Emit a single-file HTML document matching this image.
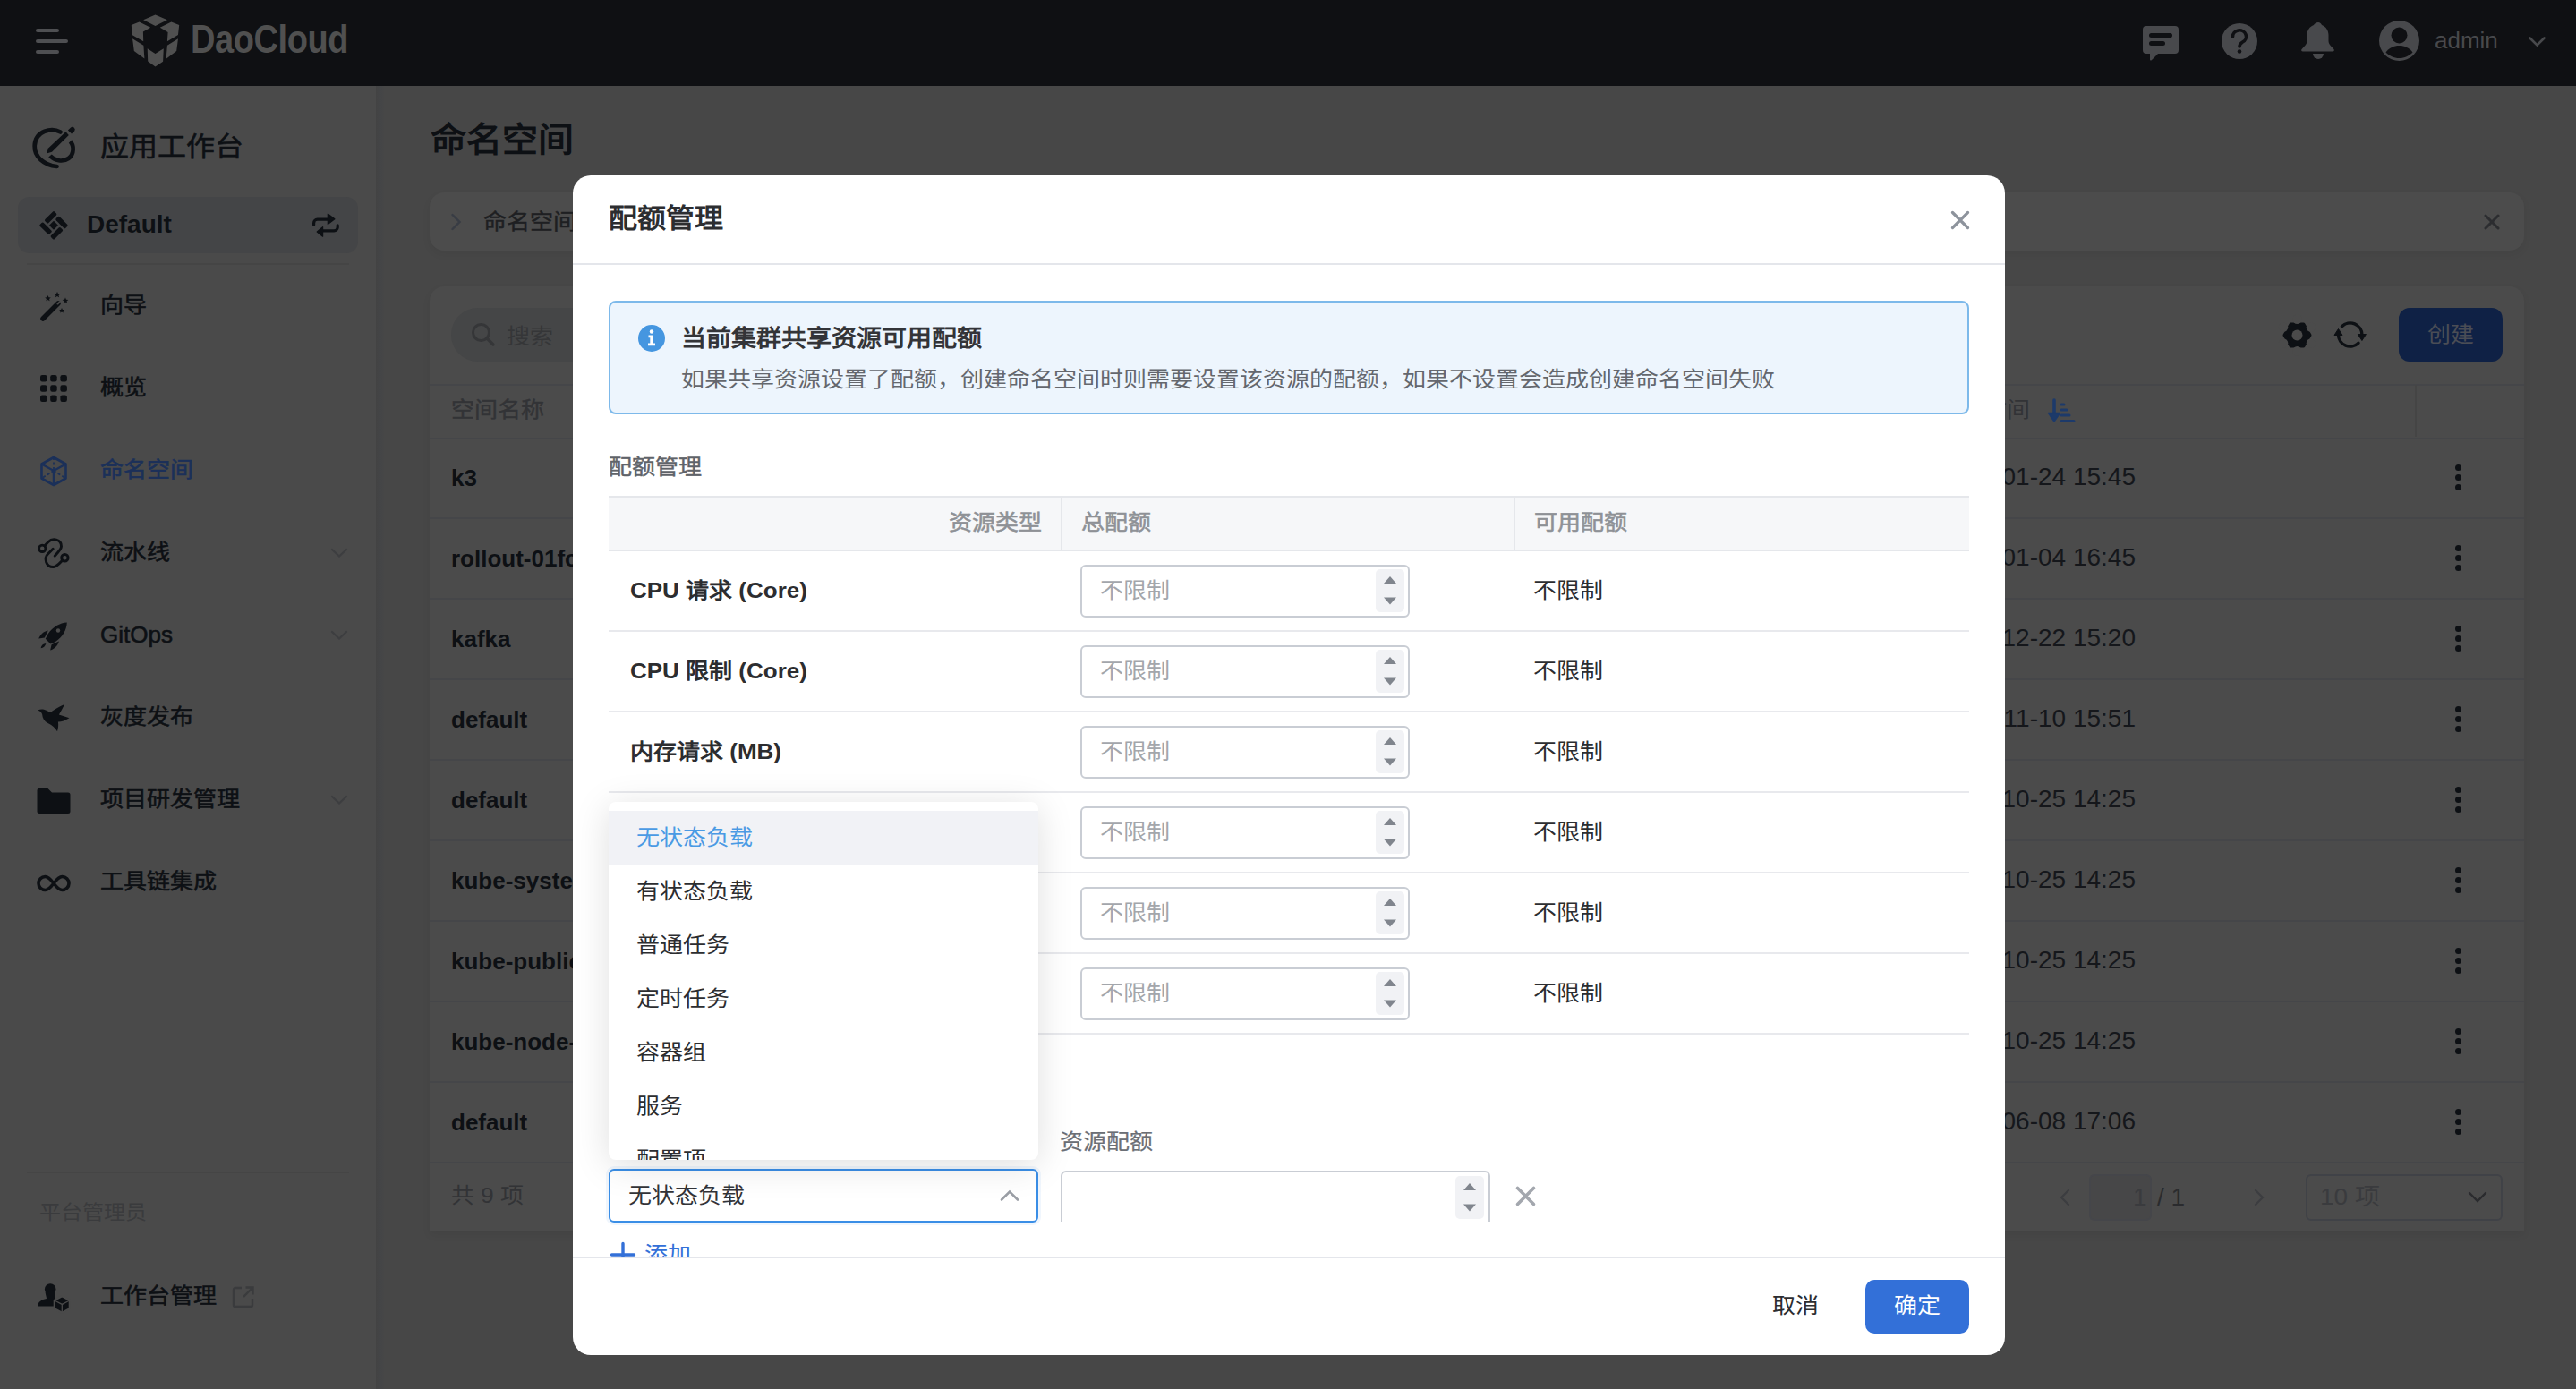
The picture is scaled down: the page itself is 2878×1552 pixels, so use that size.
<!DOCTYPE html>
<html lang="zh-CN"><head><meta charset="utf-8">
<style>
*{margin:0;padding:0;box-sizing:border-box}
html,body{width:2878px;height:1552px;overflow:hidden}
body{position:relative;background:#474747;font-family:"Liberation Sans",sans-serif;color:#0d1014}
.a{position:absolute;white-space:nowrap}
svg{position:absolute;overflow:visible}
/* header */
#hdr{position:absolute;left:0;top:0;width:2878px;height:96px;background:#0f1013}
/* sidebar */
#side{position:absolute;left:0;top:96px;width:420px;height:1456px;background:#4a4a4a}
#sideb{position:absolute;left:420px;top:96px;width:10px;height:1456px;background:linear-gradient(to right,#434343,#444547 50%,#474747)}
.nav{font-size:26px;line-height:40px;color:#0d1014;-webkit-text-stroke:0.6px currentColor}
.med{-webkit-text-stroke:0.6px currentColor}
/* bg table */
.card{position:absolute;background:#4a4a4a;border-radius:16px}
.hl{position:absolute;height:2px;background:#454649}
.tn{font-size:26px;line-height:40px;font-weight:bold;color:#0d1014}
.td{font-size:28px;line-height:40px;color:#15171b}
.keb{position:absolute;width:7px;height:7px;border-radius:50%;background:#0d1014}
/* modal */
#modal{position:absolute;left:640px;top:196px;width:1600px;height:1318px;background:#fff;border-radius:20px;overflow:hidden}
.m{position:absolute;white-space:nowrap}
</style></head><body>

<!-- HEADER -->
<div id="hdr">
  <div class="a" style="left:40px;top:32px;width:26px;height:4px;border-radius:2px;background:#4e4f52"></div>
  <div class="a" style="left:40px;top:44px;width:36px;height:4px;border-radius:2px;background:#4e4f52"></div>
  <div class="a" style="left:40px;top:56px;width:26px;height:4px;border-radius:2px;background:#4e4f52"></div>
  <!-- logo cube -->
  <svg style="left:146px;top:16px" width="56" height="60" viewBox="0 0 56 60">
    <g fill="#505050">
      <polygon points="27.5,0.55 40.9,6.35 27.5,12.9 14.2,6.35"/>
      <polygon points="0.8,12.1 9.6,8.4 22.2,14.7 13.9,19.45 14.2,30.3 1.56,23"/>
      <polygon points="54.2,12.1 45.4,8.4 32.8,14.7 41.6,19.95 40.9,30.3 52.97,23"/>
      <polygon points="2.06,27.3 14.4,34.8 15.4,49.4 3.8,41.1"/>
      <polygon points="52.97,27.3 40.9,34.8 39.6,49.7 51.2,41.1"/>
      <polygon points="18.7,38.35 27.5,43.9 36.8,38.35 36.1,52.7 27.5,58.5 19.2,52.5"/>
    </g>
  </svg>
  <div class="a" style="left:213px;top:16px;font-size:45px;line-height:56px;font-weight:bold;color:#505050;transform:scaleX(0.845);transform-origin:0 0;letter-spacing:-0.5px">DaoCloud</div>
  <!-- chat -->
  <svg style="left:2394px;top:29px" width="40" height="38" viewBox="0 0 40 38">
    <path fill="#48494c" d="M4 0h32a4 4 0 0 1 4 4v23a4 4 0 0 1-4 4H17l-7 7c-1 1-2 0.5-2-0.5V31H4a4 4 0 0 1-4-4V4a4 4 0 0 1 4-4z"/>
    <rect x="7" y="8" width="26" height="5" rx="2.5" fill="#0f1013"/>
    <rect x="7" y="17" width="18" height="5" rx="2.5" fill="#0f1013"/>
  </svg>
  <!-- help -->
  <svg style="left:2482px;top:25.5px" width="40" height="40" viewBox="0 0 40 40">
    <circle cx="20" cy="20" r="20" fill="#48494c"/>
    <path d="M12.5 15a7.5 7 0 1 1 11 6c-2.5 1.5-3.5 2.5-3.5 5" fill="none" stroke="#0f1013" stroke-width="3.6" stroke-linecap="round"/>
    <circle cx="20" cy="31.5" r="2.3" fill="#0f1013"/>
  </svg>
  <!-- bell -->
  <svg style="left:2571px;top:25px" width="38" height="42" viewBox="0 0 38 42">
    <path fill="#48494c" d="M19 0c2 0 3.5 1.5 4 3 4.5 1.5 7.5 6 7.5 11v7c0 3 2 5 5.5 8.5 1.5 1.5 1 3-1 3H2c-2 0-2.5-1.5-1-3C4.5 26 6.5 24 6.5 21v-7c0-5 3-9.5 7.5-11C14.5 1.5 17 0 19 0z"/>
    <path fill="#48494c" d="M13 35h12a6 6 0 0 1-12 0z"/>
  </svg>
  <!-- avatar -->
  <svg style="left:2657.5px;top:23px" width="45" height="45" viewBox="0 0 45 45">
    <circle cx="22.5" cy="22.5" r="22.5" fill="#48494c"/>
    <circle cx="22.5" cy="16.5" r="9" fill="#0f1013"/>
    <path d="M7.5 35.5C11 30.5 16.5 28 22.5 28s11.5 2.5 15 7.5C33.5 39.5 28.5 42 22.5 42s-11-2.5-15-6.5z" fill="#0f1013"/>
  </svg>
  <div class="a" style="left:2720px;top:27px;font-size:26px;line-height:36px;color:#48494c">admin</div>
  <svg style="left:2825px;top:41px" width="19" height="11" viewBox="0 0 19 11"><path d="M1.5 1.5l8 8 8-8" fill="none" stroke="#48494c" stroke-width="2.6" stroke-linecap="round"/></svg>
</div>

<!-- SIDEBAR -->
<div id="side"></div>
<div id="sideb"></div>
<!-- workbench -->
<svg style="left:30px;top:130px" width="60" height="65" viewBox="0 0 60 65">
  <path d="M37.5 17.5C28 12.5 9.5 15.5 8.7 33C8.3 45 19 54.5 33.5 56" fill="none" stroke="#0d1014" stroke-width="4.7" stroke-linecap="round"/>
  <path d="M48.5 28C52.5 32 53.5 42 46.5 47C40 51.5 31 49.5 26 44" fill="none" stroke="#0d1014" stroke-width="4.7"/>
  <path d="M22 41.6l2-6L43.5 17.3l3.3 3.7L28 39.8z" fill="#0d1014"/>
  <path d="M45.9 15.4l3.2-3a3 3 0 0 1 4.1 4.2l-3.2 3z" fill="#0d1014"/>
</svg>
<div class="a nav" style="left:112px;top:144px;font-size:32px;line-height:40px;transform:scaleY(0.92)">应用工作台</div>
<!-- default box -->
<div class="a" style="left:20px;top:220px;width:380px;height:63px;border-radius:13px;background:#444547"></div>
<svg style="left:40px;top:230px" width="40" height="42" viewBox="0 0 40 42">
  <g transform="translate(20 21.8) rotate(-45)" fill="#0d1014">
    <rect x="-3.60" y="-11.5" width="15.10" height="5.6" rx="1.6"/>
    <rect x="5.90" y="-3.60" width="5.6" height="15.10" rx="1.6"/>
    <rect x="-11.5" y="5.90" width="15.10" height="5.6" rx="1.6"/>
    <rect x="-11.5" y="-11.5" width="5.6" height="15.10" rx="1.6"/>
    <rect x="-3.60" y="-3.60" width="7.20" height="7.20" rx="0.8"/>
  </g>
</svg>
<div class="a nav" style="left:97px;top:231px;font-weight:bold;font-size:28px;-webkit-text-stroke:0">Default</div>
<svg style="left:340px;top:230px" width="50" height="42" viewBox="0 0 50 42">
  <path d="M10.6 21.2v-2a4 4 0 0 1 4-4h12" fill="none" stroke="#0d1014" stroke-width="3.2" stroke-linecap="round"/>
  <path d="M26.3 9.1l7.6 5.7-7.6 5.8z" fill="#0d1014" stroke="#0d1014" stroke-width="1.2" stroke-linejoin="round"/>
  <path d="M37.2 21.8v2a4 4 0 0 1-4 4h-12" fill="none" stroke="#0d1014" stroke-width="3.2" stroke-linecap="round"/>
  <path d="M20.6 23.6l-6.4 5.4 6.4 5.2z" fill="#0d1014" stroke="#0d1014" stroke-width="1.2" stroke-linejoin="round"/>
</svg>
<div class="a" style="left:30px;top:294px;width:360px;height:2px;background:#454545"></div>
<!-- wand -->
<svg style="left:40px;top:322px" width="40" height="40" viewBox="0 0 40 40">
  <path d="M8 34L25 17" stroke="#0d1014" stroke-width="5.5" stroke-linecap="round"/>
  <path d="M24.5 17.5l2-2" stroke="#4a4a4a" stroke-width="2" stroke-linecap="round"/>
  <g fill="#0d1014">
    <path d="M13.5 8l1 2.2 2.3.2-1.8 1.5.6 2.3-2.1-1.2-2.1 1.2.6-2.3-1.8-1.5 2.3-.2z"/>
    <path d="M24 4l1 2.2 2.3.2-1.8 1.5.6 2.3-2.1-1.2-2.1 1.2.6-2.3-1.8-1.5 2.3-.2z"/>
    <path d="M33 10.5l1 2.2 2.3.2-1.8 1.5.6 2.3-2.1-1.2-2.1 1.2.6-2.3-1.8-1.5 2.3-.2z"/>
    <path d="M29 22l.9 1.9 2 .2-1.5 1.3.5 2-1.9-1-1.9 1 .5-2-1.5-1.3 2-.2z"/>
  </g>
</svg>
<div class="a nav" style="left:112px;top:321px;transform:scaleY(0.92)">向导</div>
<!-- grid -->
<svg style="left:45px;top:419px" width="30" height="30" viewBox="0 0 30 30">
  <g fill="#0d1014">
    <rect x="0" y="0" width="7.5" height="7.5" rx="2.2"/><rect x="11.2" y="0" width="7.5" height="7.5" rx="2.2"/><rect x="22.4" y="0" width="7.5" height="7.5" rx="2.2"/>
    <rect x="0" y="11.2" width="7.5" height="7.5" rx="2.2"/><rect x="11.2" y="11.2" width="7.5" height="7.5" rx="2.2"/><rect x="22.4" y="11.2" width="7.5" height="7.5" rx="2.2"/>
    <rect x="0" y="22.4" width="7.5" height="7.5" rx="2.2"/><rect x="11.2" y="22.4" width="7.5" height="7.5" rx="2.2"/><rect x="22.4" y="22.4" width="7.5" height="7.5" rx="2.2"/>
  </g>
</svg>
<div class="a nav" style="left:112px;top:413px;transform:scaleY(0.92)">概览</div>
<!-- cube ns -->
<svg style="left:44px;top:509px" width="32" height="35" viewBox="0 0 32 35">
  <path d="M16 2L29.5 9.5v16L16 33 2.5 25.5v-16z" fill="none" stroke="#1b3059" stroke-width="2.6" stroke-linejoin="round"/>
  <path d="M2.5 9.5L16 17l13.5-7.5M16 17v16" fill="none" stroke="#1b3059" stroke-width="2.4"/>
  <path d="M16 2v15M16 17L2.5 25.5M16 17l13.5 8.5" fill="none" stroke="#1b3059" stroke-width="1.8" stroke-dasharray="3 2.5"/>
</svg>
<div class="a nav" style="left:112px;top:505px;color:#1b3059;transform:scaleY(0.92)">命名空间</div>
<!-- pipeline -->
<svg style="left:36px;top:596px" width="48" height="44" viewBox="0 0 48 44">
  <g fill="none" stroke="#0d1014" stroke-width="2.9" stroke-linecap="round">
    <circle cx="11.25" cy="16.8" r="3.7"/>
    <circle cx="36.4" cy="27.25" r="3.7"/>
    <path d="M14.2 13.6L18 9.5C22.5 5 32.5 6 32.5 14.5C32.5 17.5 30 20 25.2 25.2"/>
    <path d="M23.2 17.2L17.5 23C13 27.5 15 37.5 23.4 37.5C27 37.5 30 34 33.4 30.3"/>
  </g>
</svg>
<div class="a nav" style="left:112px;top:597px;transform:scaleY(0.92)">流水线</div>
<svg style="left:369px;top:612px" width="20" height="12" viewBox="0 0 20 12"><path d="M2 2l8 7.5L18 2" fill="none" stroke="#3d3e40" stroke-width="2.2" stroke-linecap="round"/></svg>
<!-- rocket -->
<svg style="left:36px;top:690px" width="48" height="40" viewBox="0 0 48 40">
  <g fill="#0d1014">
    <path d="M38.8 5.6C31 6 23 10.5 17.5 18.5L14.8 23.8L20.6 29.6L26 27C34 21.5 38.5 14 38.8 5.6z"/>
    <path d="M7.2 23.6C9 19 12.5 15.5 17.8 14.5L13.8 22.6z"/>
    <path d="M20.2 36.6C25 35 28.5 31.5 29.9 26.5L21.6 30.2z"/>
    <path d="M9.6 34.2C10 31 12 29 15.4 28.9C14.5 32 12.5 33.8 9.6 34.2z"/>
  </g>
  <circle cx="29" cy="14.5" r="2.2" fill="#4a4a4a"/>
</svg>
<div class="a nav" style="left:112px;top:689px">GitOps</div>
<svg style="left:369px;top:704px" width="20" height="12" viewBox="0 0 20 12"><path d="M2 2l8 7.5L18 2" fill="none" stroke="#3d3e40" stroke-width="2.2" stroke-linecap="round"/></svg>
<!-- bird -->
<svg style="left:36px;top:786px" width="48" height="34" viewBox="0 0 48 34">
  <path fill="#0d1014" d="M6.3 7.6C8.5 6.5 11 6.2 13 6.8C16 7.5 18 9 20.2 10C25 6.5 31 3 36.1 0.9C34 5 32 9 29.9 12.4L41.4 16.3C37 19 33 20.5 28.9 20.6C29.5 24 29 28 28 31.2C26 27.5 22 24 17.5 22C13.5 20 11.5 16.5 11.1 12C10 9.5 8.5 8.5 6.3 7.6z"/>
</svg>
<div class="a nav" style="left:112px;top:781px;transform:scaleY(0.92)">灰度发布</div>
<!-- folder -->
<svg style="left:41px;top:880px" width="38" height="30" viewBox="0 0 38 30">
  <path fill="#0d1014" d="M2.5 1h10l4.5 4.5h18a2.5 2.5 0 0 1 2.5 2.5v18.5a2.5 2.5 0 0 1-2.5 2.5H3A2.5 2.5 0 0 1 .5 26.5V3A2 2 0 0 1 2.5 1z"/>
</svg>
<div class="a nav" style="left:112px;top:873px;transform:scaleY(0.92)">项目研发管理</div>
<svg style="left:369px;top:888px" width="20" height="12" viewBox="0 0 20 12"><path d="M2 2l8 7.5L18 2" fill="none" stroke="#3d3e40" stroke-width="2.2" stroke-linecap="round"/></svg>
<!-- infinity -->
<svg style="left:41px;top:977px" width="38" height="20" viewBox="0 0 38 20">
  <path d="M19 10c-3-4-6-7.5-9.5-7.5a7.5 7.5 0 0 0 0 15c3.5 0 6.5-3.5 9.5-7.5s6-7.5 9.5-7.5a7.5 7.5 0 0 1 0 15c-3.5 0-6.5-3.5-9.5-7.5z" fill="none" stroke="#0d1014" stroke-width="3.6"/>
</svg>
<div class="a nav" style="left:112px;top:965px;transform:scaleY(0.92)">工具链集成</div>
<!-- sidebar footer -->
<div class="a" style="left:30px;top:1309px;width:360px;height:2px;background:#454545"></div>
<div class="a" style="left:44px;top:1339px;font-size:24px;line-height:32px;color:#3a3b3d;transform:scaleY(0.92)">平台管理员</div>
<svg style="left:30px;top:1420px" width="50" height="50" viewBox="0 0 50 50">
  <g fill="#0d1014">
    <ellipse cx="26.2" cy="20.6" rx="6.3" ry="6.4"/>
    <path d="M20.6 24C21 27 22 29 22 31C16.5 32.3 12.6 34 12 39.6H31V26C31.5 24.5 32 23 32 21z"/>
  </g>
  <polygon points="39.3,28.3 47.8,32.8 47.8,42.1 39.3,46.7 30.8,42.1 30.8,32.8" fill="#0d1014" stroke="#4a4a4a" stroke-width="2.2" stroke-linejoin="round"/>
  <path d="M31.4 33.2L39.3 37.4L47.2 33.2M39.3 37.4V46" fill="none" stroke="#4a4a4a" stroke-width="1.3"/>
</svg>
<div class="a nav" style="left:112px;top:1428px;font-size:26px;-webkit-text-stroke:0.6px #0d1014;transform:scaleY(0.92)">工作台管理</div>
<svg style="left:259px;top:1436px" width="26" height="26" viewBox="0 0 26 26">
  <path d="M11 3H4a2 2 0 0 0-2 2v17a2 2 0 0 0 2 2h17a2 2 0 0 0 2-2v-7" fill="none" stroke="#3a3b3d" stroke-width="2.4"/>
  <path d="M13 13L23.5 2.5M15.5 2.5h8v8" fill="none" stroke="#3a3b3d" stroke-width="2.4"/>
</svg>

<!-- MAIN BG -->
<div class="a" style="left:481px;top:126px;font-size:40px;line-height:60px;font-weight:bold;color:#0d1014;transform:scaleY(0.94);transform-origin:0 30px">命名空间</div>
<!-- breadcrumb -->
<div class="card" style="left:480px;top:215px;width:2340px;height:65px;background:#4c4c4c;box-shadow:0 4px 10px rgba(0,0,0,0.06)"></div>
<svg style="left:503px;top:238px" width="14" height="20" viewBox="0 0 14 20"><path d="M2.5 2l8 8-8 8" fill="none" stroke="#383c44" stroke-width="2.4" stroke-linecap="round"/></svg>
<div class="a" style="left:540px;top:230px;font-size:26px;line-height:36px;color:#1e1f22;-webkit-text-stroke:0.5px #1e1f22;transform:scaleY(0.92)">命名空间</div>
<svg style="left:2775px;top:239px" width="18" height="18" viewBox="0 0 18 18"><path d="M2 2l14 14M16 2L2 16" stroke="#2c2d30" stroke-width="3" stroke-linecap="round"/></svg>
<!-- table card -->
<div class="card" style="left:480px;top:320px;width:2340px;height:1056px;background:#4b4b4b;border-radius:16px 16px 0 0;box-shadow:0 4px 10px rgba(0,0,0,0.06)"></div>
<div class="a" style="left:504px;top:344px;width:600px;height:60px;border-radius:30px;background:#454647"></div>
<svg style="left:526px;top:360px" width="28" height="28" viewBox="0 0 28 28"><circle cx="11.5" cy="11.5" r="9" fill="none" stroke="#353638" stroke-width="3"/><path d="M18.5 18.5l6.5 6.5" stroke="#353638" stroke-width="3.2" stroke-linecap="round"/></svg>
<div class="a" style="left:566px;top:358px;font-size:26px;line-height:36px;color:#353638;transform:scaleY(0.92)">搜索</div>
<!-- gear -->
<svg style="left:2549.5px;top:357.7px" width="33" height="33" viewBox="0 0 33 33">
  <polygon points="30.50,16.50 23.50,28.62 9.50,28.62 2.50,16.50 9.50,4.38 23.50,4.38" fill="#0d1014" stroke="#0d1014" stroke-width="4" stroke-linejoin="round"/>
  <circle cx="31.92" cy="25.40" r="5.2" fill="#4b4b4b"/><circle cx="16.50" cy="34.30" r="5.2" fill="#4b4b4b"/><circle cx="1.08" cy="25.40" r="5.2" fill="#4b4b4b"/><circle cx="1.08" cy="7.60" r="5.2" fill="#4b4b4b"/><circle cx="16.50" cy="-1.30" r="5.2" fill="#4b4b4b"/><circle cx="31.92" cy="7.60" r="5.2" fill="#4b4b4b"/>
  <circle cx="16.5" cy="16.5" r="6" fill="#4b4b4b"/>
</svg>
<svg style="left:2604px;top:355px" width="44" height="38" viewBox="0 0 44 38">
  <path d="M12.4 9.7A13.2 13.2 0 0 1 34.9 19M31 28.3A13.2 13.2 0 0 1 8.5 19" fill="none" stroke="#0d1014" stroke-width="3.4" stroke-linecap="round"/>
  <path d="M30.4 18.5h9l-4.5 7z" fill="#0d1014" stroke="#0d1014" stroke-width="1" stroke-linejoin="round"/>
  <path d="M4 19.5h9l-4.5-7z" fill="#0d1014" stroke="#0d1014" stroke-width="1" stroke-linejoin="round"/>
</svg>
<div class="a" style="left:2680px;top:344px;width:116px;height:60px;border-radius:12px;background:#0f2145"></div>
<div class="a" style="left:2712px;top:356px;font-size:26px;line-height:36px;color:#4a4d55;transform:scaleY(0.92)">创建</div>
<!-- table header -->
<div class="hl" style="left:480px;top:429px;width:2340px"></div>
<div class="hl" style="left:480px;top:489px;width:2340px"></div>
<div class="a" style="left:2698px;top:430px;width:2px;height:58px;background:#454545"></div>
<div class="a" style="left:504px;top:440px;font-size:26px;line-height:36px;color:#323336;-webkit-text-stroke:0.5px #323336;transform:scaleY(0.92)">空间名称</div>
<div class="a" style="right:610px;top:440px;font-size:26px;line-height:36px;color:#323336;transform:scaleY(0.92)">创建时间</div>
<svg style="left:2287px;top:445px" width="32" height="28" viewBox="0 0 32 28">
  <path d="M8 2v20" stroke="#1d3a6a" stroke-width="3.6" stroke-linecap="round"/><path d="M1.5 16.5l6.5 9.5 6.5-9.5z" fill="#1d3a6a" stroke="#1d3a6a" stroke-width="1.5" stroke-linejoin="round"/>
  <path d="M16 7h3M16 13h6M16 19h9M16 25.5h14" stroke="#1d3a6a" stroke-width="3" stroke-linecap="round"/>
</svg>
<div class="hl" style="left:480px;top:578px;width:2340px"></div>
<div class="a tn" style="left:504px;top:514px">k3</div>
<div class="a td" style="right:492px;top:513px">2023-01-24 15:45</div>
<div class="keb" style="left:2742.5px;top:518.5px"></div>
<div class="keb" style="left:2742.5px;top:529.5px"></div>
<div class="keb" style="left:2742.5px;top:540.5px"></div>
<div class="hl" style="left:480px;top:668px;width:2340px"></div>
<div class="a tn" style="left:504px;top:604px">rollout-01fc</div>
<div class="a td" style="right:492px;top:603px">2023-01-04 16:45</div>
<div class="keb" style="left:2742.5px;top:608.5px"></div>
<div class="keb" style="left:2742.5px;top:619.5px"></div>
<div class="keb" style="left:2742.5px;top:630.5px"></div>
<div class="hl" style="left:480px;top:758px;width:2340px"></div>
<div class="a tn" style="left:504px;top:694px">kafka</div>
<div class="a td" style="right:492px;top:693px">2023-12-22 15:20</div>
<div class="keb" style="left:2742.5px;top:698.5px"></div>
<div class="keb" style="left:2742.5px;top:709.5px"></div>
<div class="keb" style="left:2742.5px;top:720.5px"></div>
<div class="hl" style="left:480px;top:848px;width:2340px"></div>
<div class="a tn" style="left:504px;top:784px">default</div>
<div class="a td" style="right:492px;top:783px">2023-11-10 15:51</div>
<div class="keb" style="left:2742.5px;top:788.5px"></div>
<div class="keb" style="left:2742.5px;top:799.5px"></div>
<div class="keb" style="left:2742.5px;top:810.5px"></div>
<div class="hl" style="left:480px;top:938px;width:2340px"></div>
<div class="a tn" style="left:504px;top:874px">default</div>
<div class="a td" style="right:492px;top:873px">2023-10-25 14:25</div>
<div class="keb" style="left:2742.5px;top:878.5px"></div>
<div class="keb" style="left:2742.5px;top:889.5px"></div>
<div class="keb" style="left:2742.5px;top:900.5px"></div>
<div class="hl" style="left:480px;top:1028px;width:2340px"></div>
<div class="a tn" style="left:504px;top:964px">kube-system</div>
<div class="a td" style="right:492px;top:963px">2023-10-25 14:25</div>
<div class="keb" style="left:2742.5px;top:968.5px"></div>
<div class="keb" style="left:2742.5px;top:979.5px"></div>
<div class="keb" style="left:2742.5px;top:990.5px"></div>
<div class="hl" style="left:480px;top:1118px;width:2340px"></div>
<div class="a tn" style="left:504px;top:1054px">kube-public</div>
<div class="a td" style="right:492px;top:1053px">2023-10-25 14:25</div>
<div class="keb" style="left:2742.5px;top:1058.5px"></div>
<div class="keb" style="left:2742.5px;top:1069.5px"></div>
<div class="keb" style="left:2742.5px;top:1080.5px"></div>
<div class="hl" style="left:480px;top:1208px;width:2340px"></div>
<div class="a tn" style="left:504px;top:1144px">kube-node-lease</div>
<div class="a td" style="right:492px;top:1143px">2023-10-25 14:25</div>
<div class="keb" style="left:2742.5px;top:1148.5px"></div>
<div class="keb" style="left:2742.5px;top:1159.5px"></div>
<div class="keb" style="left:2742.5px;top:1170.5px"></div>
<div class="hl" style="left:480px;top:1298px;width:2340px"></div>
<div class="a tn" style="left:504px;top:1234px">default</div>
<div class="a td" style="right:492px;top:1233px">2023-06-08 17:06</div>
<div class="keb" style="left:2742.5px;top:1238.5px"></div>
<div class="keb" style="left:2742.5px;top:1249.5px"></div>
<div class="keb" style="left:2742.5px;top:1260.5px"></div>

<!-- footer -->
<div class="a" style="left:504px;top:1318px;font-size:26px;line-height:36px;color:#323336;transform:scaleY(0.92)">共 9 项</div>
<svg style="left:2298px;top:1328px" width="20" height="20" viewBox="0 0 20 20"><path d="M13 2l-8 8 8 8" fill="none" stroke="#3c3d40" stroke-width="2.2" stroke-linecap="round"/></svg>
<div class="a" style="left:2334px;top:1312px;width:70px;height:52px;border-radius:6px;background:#474748;border:2px solid #45464a"></div>
<div class="a" style="left:2383px;top:1318px;font-size:28px;line-height:40px;color:#3a3b3e">1</div>
<div class="a" style="left:2410px;top:1318px;font-size:28px;line-height:40px;color:#2a2b2e">/ 1</div>
<svg style="left:2515px;top:1328px" width="20" height="20" viewBox="0 0 20 20"><path d="M5 2l8 8-8 8" fill="none" stroke="#3c3d40" stroke-width="2.2" stroke-linecap="round"/></svg>
<div class="a" style="left:2576px;top:1312px;width:220px;height:52px;border-radius:6px;border:2px solid #404247"></div>
<div class="a" style="left:2592px;top:1318px;font-size:28px;line-height:40px;color:#3a3b3e;transform:scaleY(0.92)">10 项</div>
<svg style="left:2757px;top:1331px" width="22" height="14" viewBox="0 0 22 14"><path d="M2 2l9 9 9-9" fill="none" stroke="#2a2b2e" stroke-width="2.4" stroke-linecap="round"/></svg>

<!-- MODAL -->
<div id="modal">
<div class="m" style="left:40px;top:28px;font-size:32px;line-height:40px;font-weight:bold;color:#2c2d30;transform:scaleY(0.92)">配额管理</div>
<svg style="left:1539px;top:39px" width="22" height="22" viewBox="0 0 22 22"><path d="M2.5 2.5l17 17M19.5 2.5l-17 17" stroke="#8d939c" stroke-width="3.2" stroke-linecap="round"/></svg>
<div class="m" style="left:0px;top:98px;width:1600px;height:2px;background:#e4e6eb"></div>
<div class="m" style="left:0px;top:100px;width:1600px;height:1108px;overflow:hidden">
<div class="m" style="left:40px;top:40px;width:1520px;height:127px;border:2px solid #7db9ea;border-radius:8px;background:#edf5fd"></div>
<svg style="left:73px;top:67px" width="30" height="30" viewBox="0 0 30 30"><circle cx="15" cy="15" r="15" fill="#4596e0"/><circle cx="15" cy="7.5" r="2.2" fill="#fff"/><path d="M11.5 11.5h5v9h2.5v2.8h-8v-2.8h2.3v-6.2h-1.8z" fill="#fff"/></svg>
<div class="m" style="left:121px;top:63px;font-size:28px;line-height:40px;font-weight:bold;color:#333438;transform:scaleY(0.92)">当前集群共享资源可用配额</div>
<div class="m" style="left:121px;top:110px;font-size:26px;line-height:36px;color:#64676d;transform:scaleY(0.92)">如果共享资源设置了配额，创建命名空间时则需要设置该资源的配额，如果不设置会造成创建命名空间失败</div>
<div class="m" style="left:40px;top:208px;font-size:26px;line-height:36px;color:#5f6369;-webkit-text-stroke:0.5px #5f6369;transform:scaleY(0.92)">配额管理</div>
<div class="m" style="left:40px;top:258px;width:1520px;height:62px;background:#f6f7f9;border-top:2px solid #e5e7eb;border-bottom:2px solid #e5e7eb"></div>
<div class="m" style="left:545px;top:260px;width:2px;height:58px;background:#e5e7eb"></div>
<div class="m" style="left:1051px;top:260px;width:2px;height:58px;background:#e5e7eb"></div>
<div class="m" style="left:0px;top:270px;width:524px;text-align:right;font-size:26px;line-height:36px;color:#8e9196;-webkit-text-stroke:0.6px #8e9196;transform:scaleY(0.92)">资源类型</div>
<div class="m" style="left:568px;top:270px;font-size:26px;line-height:36px;color:#8e9196;-webkit-text-stroke:0.6px #8e9196;transform:scaleY(0.92)">总配额</div>
<div class="m" style="left:1074px;top:270px;font-size:26px;line-height:36px;color:#8e9196;-webkit-text-stroke:0.6px #8e9196;transform:scaleY(0.92)">可用配额</div>
<div class="m" style="left:40px;top:408px;width:1520px;height:2px;background:#e8e9ed"></div>
<div class="m" style="left:64px;top:344px;font-size:26px;line-height:40px;font-weight:bold;color:#2c2d30;transform:scaleY(0.92)">CPU 请求 (Core)</div>
<div class="m" style="left:567px;top:335px;width:368px;height:59px;border:2px solid #c9cdd4;border-radius:6px;background:#fff"></div>
<div class="m" style="left:589px;top:346px;font-size:26px;line-height:36px;color:#a3a6ab;transform:scaleY(0.92)">不限制</div>
<div class="m" style="left:897px;top:340px;width:32px;height:48px;border-radius:5px;background:#f1f2f5"></div>
<svg style="left:905px;top:348px" width="16" height="32" viewBox="0 0 16 32"><path d="M1 8L8 0l7 8z" fill="#80858d"/><path d="M1 23.5h14L8 31.5z" fill="#80858d"/></svg>
<div class="m" style="left:1073px;top:346px;font-size:26px;line-height:36px;color:#2c2d30;transform:scaleY(0.92)">不限制</div>
<div class="m" style="left:40px;top:498px;width:1520px;height:2px;background:#e8e9ed"></div>
<div class="m" style="left:64px;top:434px;font-size:26px;line-height:40px;font-weight:bold;color:#2c2d30;transform:scaleY(0.92)">CPU 限制 (Core)</div>
<div class="m" style="left:567px;top:425px;width:368px;height:59px;border:2px solid #c9cdd4;border-radius:6px;background:#fff"></div>
<div class="m" style="left:589px;top:436px;font-size:26px;line-height:36px;color:#a3a6ab;transform:scaleY(0.92)">不限制</div>
<div class="m" style="left:897px;top:430px;width:32px;height:48px;border-radius:5px;background:#f1f2f5"></div>
<svg style="left:905px;top:438px" width="16" height="32" viewBox="0 0 16 32"><path d="M1 8L8 0l7 8z" fill="#80858d"/><path d="M1 23.5h14L8 31.5z" fill="#80858d"/></svg>
<div class="m" style="left:1073px;top:436px;font-size:26px;line-height:36px;color:#2c2d30;transform:scaleY(0.92)">不限制</div>
<div class="m" style="left:40px;top:588px;width:1520px;height:2px;background:#e8e9ed"></div>
<div class="m" style="left:64px;top:524px;font-size:26px;line-height:40px;font-weight:bold;color:#2c2d30;transform:scaleY(0.92)">内存请求 (MB)</div>
<div class="m" style="left:567px;top:515px;width:368px;height:59px;border:2px solid #c9cdd4;border-radius:6px;background:#fff"></div>
<div class="m" style="left:589px;top:526px;font-size:26px;line-height:36px;color:#a3a6ab;transform:scaleY(0.92)">不限制</div>
<div class="m" style="left:897px;top:520px;width:32px;height:48px;border-radius:5px;background:#f1f2f5"></div>
<svg style="left:905px;top:528px" width="16" height="32" viewBox="0 0 16 32"><path d="M1 8L8 0l7 8z" fill="#80858d"/><path d="M1 23.5h14L8 31.5z" fill="#80858d"/></svg>
<div class="m" style="left:1073px;top:526px;font-size:26px;line-height:36px;color:#2c2d30;transform:scaleY(0.92)">不限制</div>
<div class="m" style="left:40px;top:678px;width:1520px;height:2px;background:#e8e9ed"></div>
<div class="m" style="left:64px;top:614px;font-size:26px;line-height:40px;font-weight:bold;color:#2c2d30;transform:scaleY(0.92)">内存限制 (MB)</div>
<div class="m" style="left:567px;top:605px;width:368px;height:59px;border:2px solid #c9cdd4;border-radius:6px;background:#fff"></div>
<div class="m" style="left:589px;top:616px;font-size:26px;line-height:36px;color:#a3a6ab;transform:scaleY(0.92)">不限制</div>
<div class="m" style="left:897px;top:610px;width:32px;height:48px;border-radius:5px;background:#f1f2f5"></div>
<svg style="left:905px;top:618px" width="16" height="32" viewBox="0 0 16 32"><path d="M1 8L8 0l7 8z" fill="#80858d"/><path d="M1 23.5h14L8 31.5z" fill="#80858d"/></svg>
<div class="m" style="left:1073px;top:616px;font-size:26px;line-height:36px;color:#2c2d30;transform:scaleY(0.92)">不限制</div>
<div class="m" style="left:40px;top:768px;width:1520px;height:2px;background:#e8e9ed"></div>
<div class="m" style="left:64px;top:704px;font-size:26px;line-height:40px;font-weight:bold;color:#2c2d30;transform:scaleY(0.92)">存储请求 (GB)</div>
<div class="m" style="left:567px;top:695px;width:368px;height:59px;border:2px solid #c9cdd4;border-radius:6px;background:#fff"></div>
<div class="m" style="left:589px;top:706px;font-size:26px;line-height:36px;color:#a3a6ab;transform:scaleY(0.92)">不限制</div>
<div class="m" style="left:897px;top:700px;width:32px;height:48px;border-radius:5px;background:#f1f2f5"></div>
<svg style="left:905px;top:708px" width="16" height="32" viewBox="0 0 16 32"><path d="M1 8L8 0l7 8z" fill="#80858d"/><path d="M1 23.5h14L8 31.5z" fill="#80858d"/></svg>
<div class="m" style="left:1073px;top:706px;font-size:26px;line-height:36px;color:#2c2d30;transform:scaleY(0.92)">不限制</div>
<div class="m" style="left:40px;top:858px;width:1520px;height:2px;background:#e8e9ed"></div>
<div class="m" style="left:64px;top:794px;font-size:26px;line-height:40px;font-weight:bold;color:#2c2d30;transform:scaleY(0.92)">存储限制 (GB)</div>
<div class="m" style="left:567px;top:785px;width:368px;height:59px;border:2px solid #c9cdd4;border-radius:6px;background:#fff"></div>
<div class="m" style="left:589px;top:796px;font-size:26px;line-height:36px;color:#a3a6ab;transform:scaleY(0.92)">不限制</div>
<div class="m" style="left:897px;top:790px;width:32px;height:48px;border-radius:5px;background:#f1f2f5"></div>
<svg style="left:905px;top:798px" width="16" height="32" viewBox="0 0 16 32"><path d="M1 8L8 0l7 8z" fill="#80858d"/><path d="M1 23.5h14L8 31.5z" fill="#80858d"/></svg>
<div class="m" style="left:1073px;top:796px;font-size:26px;line-height:36px;color:#2c2d30;transform:scaleY(0.92)">不限制</div>
<div class="m" style="left:544px;top:962px;font-size:26px;line-height:36px;color:#6b6f76;-webkit-text-stroke:0.25px #6b6f76;transform:scaleY(0.92)">资源配额</div>
<div class="m" style="left:40px;top:962px;font-size:26px;line-height:36px;color:#6b6f76;transform:scaleY(0.92)">资源类型</div>
<div class="m" style="left:545px;top:1012px;width:480px;height:64px;border:2px solid #c9cdd4;border-radius:6px;background:#fff;clip-path:inset(0 0 7px 0)"></div>
<div class="m" style="left:986px;top:1018px;width:32px;height:48px;border-radius:5px;background:#f1f2f5"></div>
<svg style="left:994px;top:1026px" width="16" height="32" viewBox="0 0 16 32"><path d="M1 8L8 0l7 8z" fill="#80858d"/><path d="M1 23.5h14L8 31.5z" fill="#80858d"/></svg>
<svg style="left:1053px;top:1029px" width="23" height="23" viewBox="0 0 23 23"><path d="M2.5 2.5l18 18M20.5 2.5l-18 18" stroke="#a3a7ae" stroke-width="3.6" stroke-linecap="round"/></svg>
<div class="m" style="left:40px;top:1010px;width:480px;height:60px;border:2px solid #3a8ee6;border-radius:6px;background:#fff;box-shadow:0 0 0 3px rgba(58,142,230,0.08)"></div>
<div class="m" style="left:62px;top:1020px;font-size:26px;line-height:40px;color:#333438;transform:scaleY(0.92)">无状态负载</div>
<svg style="left:477px;top:1033px" width="22" height="14" viewBox="0 0 22 14"><path d="M2 11.5l9-9 9 9" fill="none" stroke="#9a9ea5" stroke-width="2.6" stroke-linecap="round"/></svg>
<svg style="left:42px;top:1092px" width="28" height="28" viewBox="0 0 28 28"><path d="M14 1.5v25M1.5 14h25" stroke="#3370d8" stroke-width="3.4" stroke-linecap="round"/></svg>
<div class="m" style="left:80px;top:1086px;font-size:26px;line-height:40px;color:#3370d8;transform:scaleY(0.92)">添加</div>
<div class="m" style="left:40px;top:600px;width:480px;height:400px;background:#fff;border-radius:8px;box-shadow:0 6px 40px rgba(0,0,0,0.13);overflow:hidden">
<div class="m" style="left:0;top:10px;width:480px;height:60px;background:#f1f2f6"></div>
<div class="m" style="left:31px;top:22px;font-size:26px;line-height:36px;color:#4a9ae4;transform:scaleY(0.92)">无状态负载</div>
<div class="m" style="left:31px;top:82px;font-size:26px;line-height:36px;color:#2c2d30;transform:scaleY(0.92)">有状态负载</div>
<div class="m" style="left:31px;top:142px;font-size:26px;line-height:36px;color:#2c2d30;transform:scaleY(0.92)">普通任务</div>
<div class="m" style="left:31px;top:202px;font-size:26px;line-height:36px;color:#2c2d30;transform:scaleY(0.92)">定时任务</div>
<div class="m" style="left:31px;top:262px;font-size:26px;line-height:36px;color:#2c2d30;transform:scaleY(0.92)">容器组</div>
<div class="m" style="left:31px;top:322px;font-size:26px;line-height:36px;color:#2c2d30;transform:scaleY(0.92)">服务</div>
<div class="m" style="left:31px;top:382px;font-size:26px;line-height:36px;color:#2c2d30;transform:scaleY(0.92)">配置项</div>
</div>
</div>
<div class="m" style="left:0px;top:1208px;width:1600px;height:2px;background:#e4e6eb"></div>
<div class="m" style="left:1340px;top:1245px;font-size:26px;line-height:36px;color:#2c2d30;transform:scaleY(0.92)">取消</div>
<div class="m" style="left:1444px;top:1234px;width:116px;height:60px;border-radius:10px;background:#3370d8"></div>
<div class="m" style="left:1476px;top:1245px;font-size:26px;line-height:36px;color:#fff;transform:scaleY(0.92)">确定</div>
</div>

</body></html>
